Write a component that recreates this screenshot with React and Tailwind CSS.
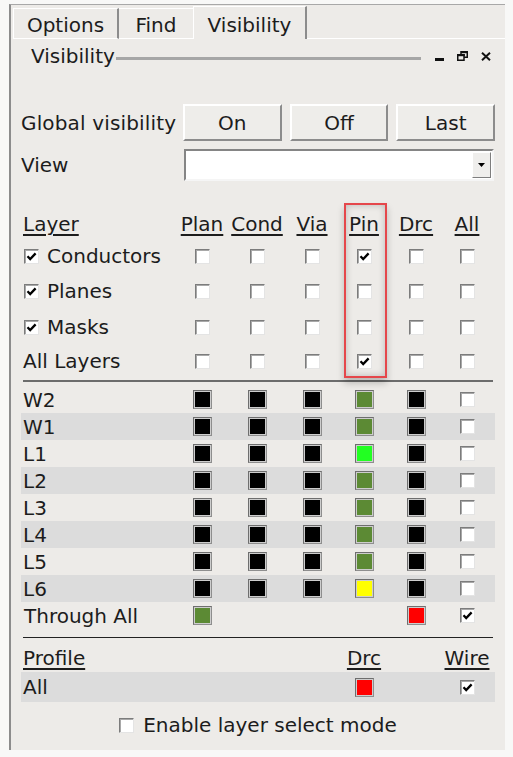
import React from "react";

const cols = "grid grid-cols-[158px_46px_64px_46px_58px_46px_56px] items-center";

const GREEN = "bg-[#5c8a34]";

const layerRows = [
  { name: "Conductors", box: true, vals: [0, 0, 0, 1, 0, 0] },
  { name: "Planes", box: true, vals: [0, 0, 0, 0, 0, 0] },
  { name: "Masks", box: true, vals: [0, 0, 0, 0, 0, 0] },
  { name: "All Layers", box: false, vals: [0, 0, 0, 1, 0, 0] },
];

// heights keep the odd spacing of the original dialog
const layerHeights = ["h-[34px]", "h-[36px]", "h-[36px]", "h-[32px]"];

const colorRows = [
  { name: "W2", pin: GREEN },
  { name: "W1", pin: GREEN },
  { name: "L1", pin: "bg-[#22ff22]" },
  { name: "L2", pin: GREEN },
  { name: "L3", pin: GREEN },
  { name: "L4", pin: GREEN },
  { name: "L5", pin: GREEN },
  { name: "L6", pin: "bg-[#ffff00]" },
];

function Check({ on }) {
  return (
    <span className="flex h-[15px] w-[15px] items-center justify-center border border-t-[#7c7c7c] border-l-[#7c7c7c] border-b-[#e4e4e4] border-r-[#e4e4e4] bg-white shadow-[inset_1px_1px_0_#a8a8a8]">
      {on && (
        <svg width="11" height="9" viewBox="0 0 11 9">
          <path d="M1.5 4.2 L4.2 7 L9.6 1.4" fill="none" stroke="#000" strokeWidth="2.3" />
        </svg>
      )}
    </span>
  );
}

function Swatch({ color }) {
  return (
    <span className="block h-[19px] w-[19px] border border-t-[#6e6e6e] border-l-[#6e6e6e] border-b-[#8e8e8e] border-r-[#8e8e8e] bg-[#cdcdcd] p-[1px]">
      <span className={`block h-full w-full ${color}`} />
    </span>
  );
}

function Cell({ children }) {
  return <div className="flex items-center justify-center">{children}</div>;
}

function Btn({ children }) {
  return (
    <div className="flex h-[37px] items-center justify-center border-2 border-t-white border-l-white border-b-[#8c8c8c] border-r-[#8c8c8c] bg-[#eeedea]">
      {children}
    </div>
  );
}

export default function App() {
  return (
    <div className="h-[757px] w-[513px] overflow-hidden bg-[#f8f8f7] pl-[9px] pt-[4px] font-['DejaVu_Sans','Liberation_Sans',sans-serif] text-[20px] leading-none text-[#1c1c1c]">
      <div className="h-[746px] w-[496px] border-l-2 border-t border-l-[#8c8c8c] border-t-[#a8a8a8] bg-[#edebe8]">
        {/* tabs */}
        <div className="flex h-[34px] items-end pl-[2px]">
          <div className="flex h-[31px] w-[106px] items-center justify-center border-t border-l border-b border-r-2 border-t-white border-l-white border-b-white border-r-[#8c8c8c] pt-[2px]">
            Options
          </div>
          <div className="flex h-[31px] w-[74px] items-center justify-center border-t border-b border-t-white border-b-white pt-[2px]">
            Find
          </div>
          <div className="flex h-[33px] w-[114px] items-center justify-center border-t border-l border-r-2 border-t-white border-l-white border-r-[#8c8c8c] pt-[4px]">
            Visibility
          </div>
          <div className="h-[1px] flex-1 bg-white" />
        </div>

        {/* dock title */}
        <div className="flex h-[34px] items-center pl-[20px] pr-[12px]">
          <span className="-mt-[1px]">Visibility</span>
          <div className="ml-[1px] mt-[4px] h-[3px] w-[305px] bg-[#a6a6a6]" />
          <div className="ml-[14px] flex items-center gap-[13px]">
            <svg width="9" height="12" viewBox="0 0 9 12">
              <rect x="0" y="8" width="9" height="3" fill="#111" />
            </svg>
            <svg width="11" height="10" viewBox="0 0 11 10">
              <rect x="4" y="0.75" width="6.25" height="5.5" fill="none" stroke="#111" strokeWidth="1.5" />
              <rect x="4" y="0" width="7" height="2.2" fill="#111" />
              <rect x="0.75" y="3.75" width="6.25" height="5.5" fill="#edebe8" stroke="#111" strokeWidth="1.5" />
              <rect x="0" y="3" width="7.75" height="2.2" fill="#111" />
            </svg>
            <svg width="10" height="9" viewBox="0 0 10 9">
              <path d="M1 0.8 L9 8.2 M9 0.8 L1 8.2" stroke="#111" strokeWidth="2" />
            </svg>
          </div>
        </div>

        <div className="px-[10px]">
          {/* global visibility */}
          <div className="mt-[31px] flex h-[37px] items-center">
            <span className="w-[162px] tracking-[0.15px]">Global visibility</span>
            <div className="grid flex-1 grid-cols-3 gap-[8px]">
              <Btn>On</Btn>
              <Btn>Off</Btn>
              <Btn>Last</Btn>
            </div>
          </div>

          {/* view */}
          <div className="mt-[8px] flex h-[32px] items-center">
            <span className="w-[163px]">View</span>
            <div className="mr-[1px] flex h-[32px] flex-1 items-center justify-end border-2 border-t-[#858585] border-l-[#858585] border-b-[#f5f5f5] border-r-[#f5f5f5] bg-white pr-[1px]">
              <div className="flex h-[26px] w-[19px] items-center justify-center border border-t-white border-l-white border-b-[#7e7e7e] border-r-[#7e7e7e] bg-[#efeeec]">
                <svg width="7" height="4" viewBox="0 0 7 4">
                  <path d="M0 0 L7 0 L3.5 4 Z" fill="#000" />
                </svg>
              </div>
            </div>
          </div>

          {/* layer table */}
          <div className="relative mt-[28px]">
            <div className={`${cols} h-[30px]`}>
              <span className="pl-[2px] underline underline-offset-[3px]">Layer</span>
              {["Plan", "Cond", "Via", "Pin", "Drc", "All"].map((h) => (
                <span key={h} className="text-center underline underline-offset-[3px]">
                  {h}
                </span>
              ))}
            </div>
            {layerRows.map((r, i) => (
              <div key={r.name} className={`${cols} ${layerHeights[i]}`}>
                <div className="flex items-center gap-[8px] pl-[3px]">
                  {r.box && <Check on />}
                  <span className={r.box ? "" : "-ml-[1px]"}>{r.name}</span>
                </div>
                {r.vals.map((v, j) => (
                  <Cell key={j}>
                    <Check on={v === 1} />
                  </Cell>
                ))}
              </div>
            ))}
            <div className="pointer-events-none absolute left-[323px] top-[-6px] h-[175px] w-[43px] border-2 border-[#e5474b] shadow-[inset_0_0_7px_rgba(0,0,0,0.22),0_5px_7px_rgba(0,0,0,0.22)]" />
          </div>

          <div className="ml-[2px] mt-[3px] h-[2px] w-[470px] bg-[#6c6c6c]" />

          {/* colour rows */}
          <div className="mt-[4px]">
            {colorRows.map((r, i) => (
              <div key={r.name} className={`${cols} h-[27px] ${i % 2 === 1 ? "bg-[#dcdcdc]" : ""}`}>
                <span className="pl-[2px]">{r.name}</span>
                <Cell><Swatch color="bg-black" /></Cell>
                <Cell><Swatch color="bg-black" /></Cell>
                <Cell><Swatch color="bg-black" /></Cell>
                <Cell><Swatch color={r.pin} /></Cell>
                <Cell><Swatch color="bg-black" /></Cell>
                <Cell><Check /></Cell>
              </div>
            ))}
            <div className={`${cols} h-[27px]`}>
              <span className="pl-[3px]">Through All</span>
              <Cell><Swatch color={GREEN} /></Cell>
              <div />
              <div />
              <div />
              <Cell><Swatch color="bg-[#ff0000]" /></Cell>
              <Cell><Check on /></Cell>
            </div>
          </div>

          <div className="ml-[2px] mt-[8px] h-[1px] w-[470px] bg-[#222]" />

          {/* profile */}
          <div className={`${cols} mt-[6px] h-[28px]`}>
            <span className="pl-[2px] underline underline-offset-[3px]">Profile</span>
            <div />
            <div />
            <div />
            <span className="text-center underline underline-offset-[3px]">Drc</span>
            <div />
            <span className="text-center underline underline-offset-[3px]">Wire</span>
          </div>
          <div className={`${cols} h-[30px] bg-[#dcdcdc]`}>
            <span className="pl-[2px]">All</span>
            <div />
            <div />
            <div />
            <Cell><Swatch color="bg-[#ff0000]" /></Cell>
            <div />
            <Cell><Check on /></Cell>
          </div>

          <div className="mt-[11px] flex h-[24px] items-center justify-center gap-[9px]">
            <Check />
            <span>Enable layer select mode</span>
          </div>
        </div>
      </div>
    </div>
  );
}
